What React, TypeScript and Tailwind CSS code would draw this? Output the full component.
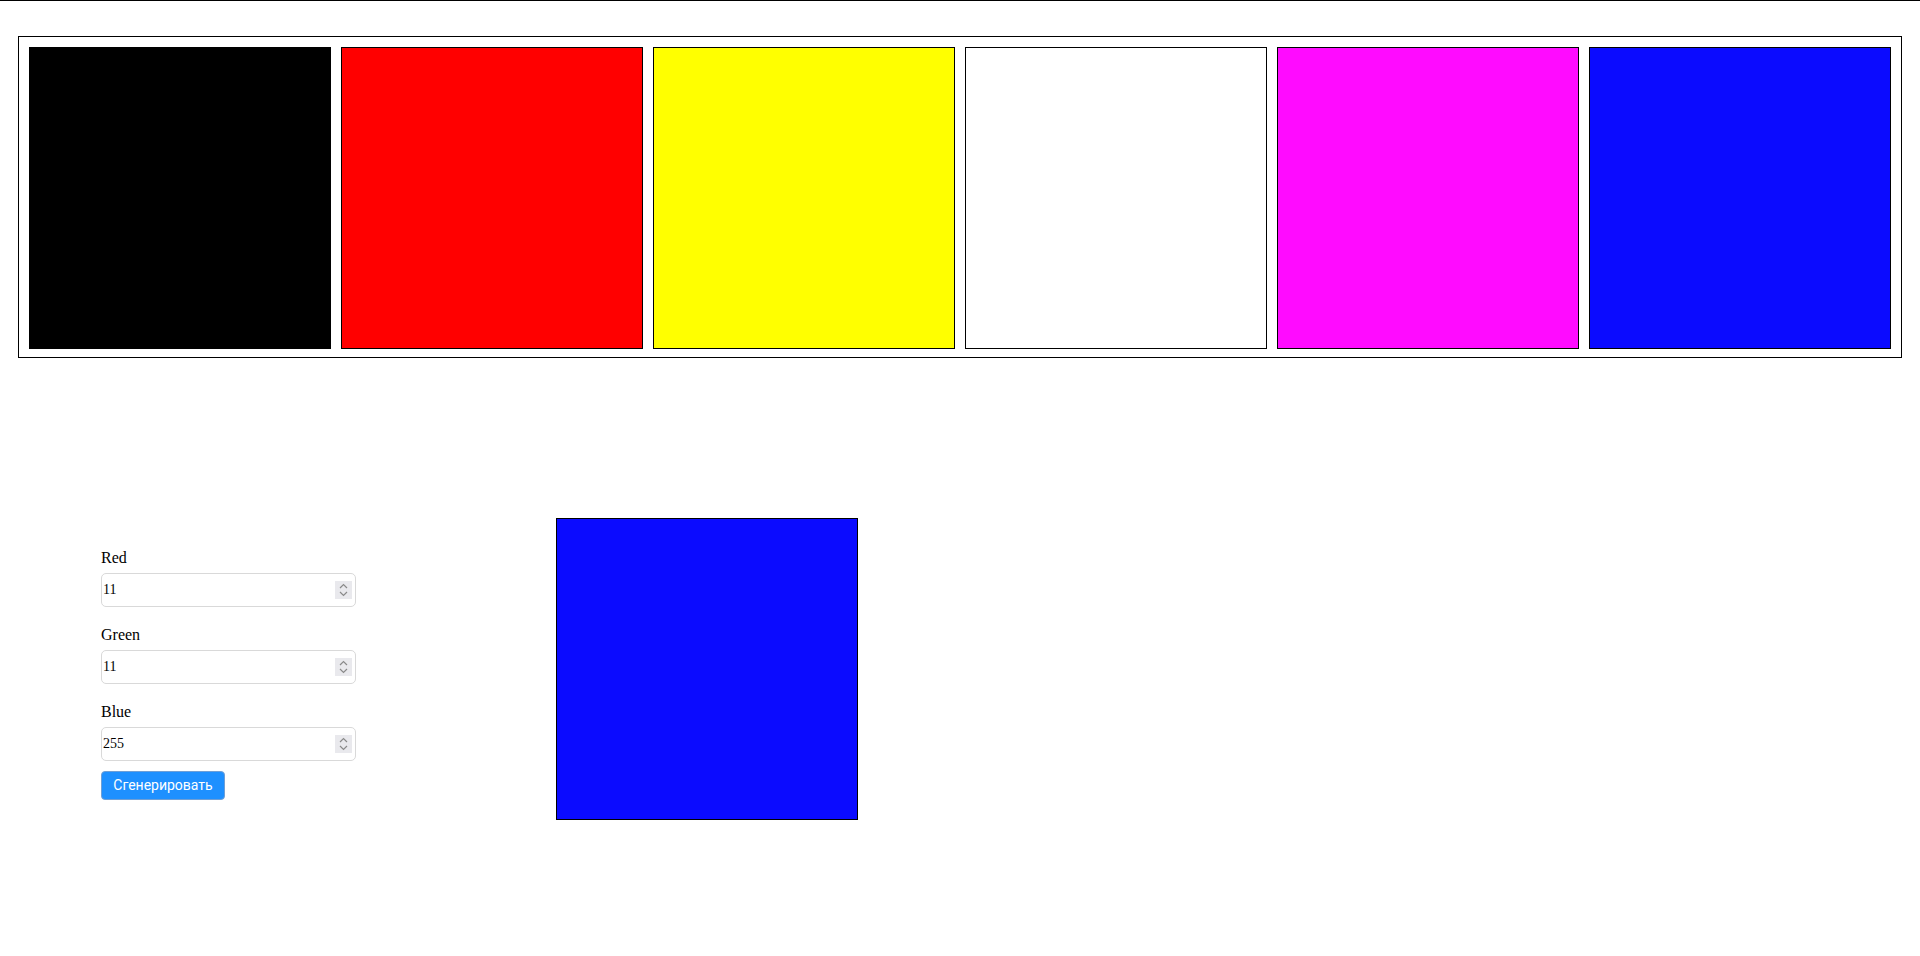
const swatches = ['#000000', '#ff0000', '#ffff00', '#ffffff', '#ff0bff', '#0b0bff'];

function NumberField({ label, value }: { label: string; value: string }) {
  return (
    <div className="flex flex-col">
      <label className="mb-[6px] h-[18px] text-[16px] leading-[18px] text-black">{label}</label>
      <div className="flex h-[34px] w-[255px] items-center rounded-[5px] border border-[#d9d9d9] bg-white pl-[1px] pr-[3px]">
        <input
          type="text"
          defaultValue={value}
          className="h-full min-w-0 flex-1 bg-transparent text-[14px] text-black outline-none"
          style={{ fontFamily: '"Liberation Serif", serif' }}
        />
        <div className="flex h-[18px] w-[17px] items-center justify-center bg-[#e9e9ed]">
          <svg width="9" height="14" viewBox="0 0 9 14" fill="none" stroke="#8a8a8a" strokeWidth="1.2">
            <path d="M1 5 L4.5 1.5 L8 5" />
            <path d="M1 9 L4.5 12.5 L8 9" />
          </svg>
        </div>
      </div>
    </div>
  );
}

export default function App() {
  return (
    <div className="min-h-screen bg-white border-t border-black" style={{ fontFamily: '"Liberation Serif", serif' }}>
      {/* Palette */}
      <div className="mx-[18px] mt-[35px] flex gap-[10px] border border-black px-[10px] pt-[10px] pb-[8px]">
        {swatches.map((c) => (
          <div key={c} className="h-[302px] flex-1 border border-black" style={{ backgroundColor: c }} />
        ))}
      </div>

      {/* Generator */}
      <div className="mt-[160px] flex items-start pl-[101px]">
        <div className="mt-[31px] flex w-[255px] flex-col gap-[19px]">
          <NumberField label="Red" value="11" />
          <NumberField label="Green" value="11" />
          <div className="flex flex-col">
            <NumberField label="Blue" value="255" />
            <button
              className="mt-[10px] h-[29px] w-[124px] rounded-[4px] border border-[#6f9fd6] bg-[#1e90ff] text-[14px] text-white"
              style={{ fontFamily: 'Roboto, sans-serif' }}
            >
              Сгенерировать
            </button>
          </div>
        </div>
        <div className="ml-[200px] h-[302px] w-[302px] border border-black bg-[#0b0bff]" />
      </div>
    </div>
  );
}
